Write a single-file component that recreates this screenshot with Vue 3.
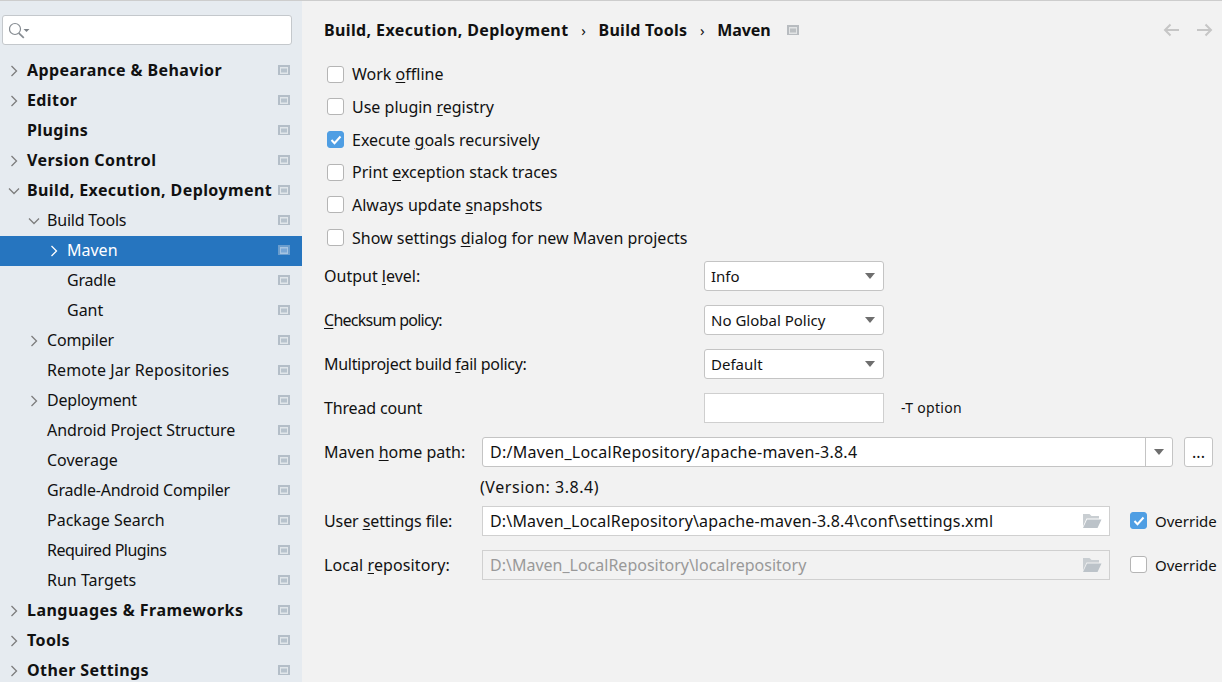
<script setup>
const tree = [
  { t: 'Appearance & Behavior', l: 0, b: true, a: 'r' },
  { t: 'Editor', l: 0, b: true, a: 'r' },
  { t: 'Plugins', l: 0, b: true },
  { t: 'Version Control', l: 0, b: true, a: 'r' },
  { t: 'Build, Execution, Deployment', l: 0, b: true, a: 'd' },
  { t: 'Build Tools', l: 1, a: 'd', c: 'tight' },
  { t: 'Maven', l: 2, a: 'r', s: true },
  { t: 'Gradle', l: 2, c: 'tight' },
  { t: 'Gant', l: 2 },
  { t: 'Compiler', l: 1, a: 'r', c: 'tight' },
  { t: 'Remote Jar Repositories', l: 1, c: 'loose' },
  { t: 'Deployment', l: 1, a: 'r', c: 'tight' },
  { t: 'Android Project Structure', l: 1, c: 'slim' },
  { t: 'Coverage', l: 1 },
  { t: 'Gradle-Android Compiler', l: 1, c: 'tight' },
  { t: 'Package Search', l: 1 },
  { t: 'Required Plugins', l: 1, c: 'tighter' },
  { t: 'Run Targets', l: 1 },
  { t: 'Languages & Frameworks', l: 0, b: true, a: 'r', c: 'wide' },
  { t: 'Tools', l: 0, b: true, a: 'r' },
  { t: 'Other Settings', l: 0, b: true, a: 'r' },
]
const checks = [
  ['Work ', 'o', 'ffline', false],
  ['Use plugin ', 'r', 'egistry', false],
  ['Execute ', 'g', 'oals recursively', true],
  ['Print ', 'e', 'xception stack traces', false],
  ['Always update ', 's', 'napshots', false],
  ['Show settings ', 'd', 'ialog for new Maven projects', false],
]
const selects = [
  ['Output ', 'l', 'evel:', 'Info', ''],
  ['', 'C', 'hecksum policy:', 'No Global Policy', 'ck'],
  ['Multiproject build ', 'f', 'ail policy:', 'Default', 'mp'],
]
</script>

<template>
  <div class="page">
    <aside class="side">
      <div class="search">
        <svg width="24" height="18" viewBox="0 0 24 18">
          <circle cx="6" cy="8" r="5.500" fill="none" stroke="#868c92" stroke-width="1.200" />
          <path d="M9.800 12.200l5 4.600" stroke="#868c92" stroke-width="1.800" />
          <path d="M14.500 8h6l-3 3z" fill="#7c8288" />
        </svg>
      </div>
      <div class="tree">
        <div v-for="n in tree" :key="n.t" class="row" :class="['lv' + n.l, { sel: n.s }]">
          <span class="arrow">
            <svg v-if="n.a" width="12" height="12" viewBox="0 0 12 12">
              <path v-if="n.a === 'r'" d="M3.500 1l5 5-5 5" fill="none" stroke="currentColor" stroke-width="1.300" />
              <path v-else d="M1 3.500l5 5 5-5" fill="none" stroke="currentColor" stroke-width="1.300" />
            </svg>
          </span>
          <span class="lbl" :class="[n.c, { bold: n.b }]">{{ n.t }}</span>
          <svg class="proj" width="12" height="10" viewBox="0 0 12 10">
            <rect class="p1" width="12" height="10" />
            <rect class="p2" x="2" y="2" width="8" height="7" />
            <rect class="p3" x="3" y="3.500" width="6" height="4" />
          </svg>
        </div>
      </div>
    </aside>
    <main class="main">
      <header class="head">
        <div class="crumbs">
          <b>Build, Execution, Deployment</b><span class="sep">›</span>
          <b class="bt">Build Tools</b><span class="sep">›</span>
          <b class="mv">Maven</b>
          <svg class="crumbproj" width="12" height="10" viewBox="0 0 12 10">
            <rect width="12" height="10" fill="#b8bcc0" />
            <rect x="2" y="2" width="8" height="7" fill="#e2e4e5" />
            <rect x="3" y="3.500" width="6" height="4" fill="#bcc0c3" />
          </svg>
        </div>
        <div class="nav">
          <svg width="16" height="14" viewBox="0 0 16 14"><path d="M16 7H2M7.500 1.500L2 7l5.500 5.500" fill="none" stroke="#c6c6c6" stroke-width="2" /></svg>
          <svg width="16" height="14" viewBox="0 0 16 14"><path d="M0 7h14M8.500 1.500L14 7l-5.500 5.500" fill="none" stroke="#c6c6c6" stroke-width="2" /></svg>
        </div>
      </header>

      <div class="checks">
        <label v-for="c in checks" :key="c[1] + c[2]" class="check">
          <span class="box" :class="{ on: c[3] }">
            <svg v-if="c[3]" width="12" height="10" viewBox="0 0 12 10"><path d="M1.500 5l3 3.200L10.500 1.500" fill="none" stroke="#fff" stroke-width="2" /></svg>
          </span>
          <span>{{ c[0] }}<u>{{ c[1] }}</u>{{ c[2] }}</span>
        </label>
      </div>

      <div class="selects">
        <div v-for="s in selects" :key="s[2]" class="frow">
          <span class="flabel wide" :class="s[4]">{{ s[0] }}<u>{{ s[1] }}</u>{{ s[2] }}</span>
          <div class="select">
            <span>{{ s[3] }}</span>
            <i class="tri"></i>
          </div>
        </div>
        <div class="frow">
          <span class="flabel wide tc">Thread count</span>
          <div class="plain"></div>
          <span class="hint">-T option</span>
        </div>
      </div>

      <div class="frow">
        <span class="flabel">Maven <u>h</u>ome path:</span>
        <div class="combo">
          <span class="val">D:/Maven_LocalRepository/apache-maven-3.8.4</span>
          <span class="drop"><i class="tri"></i></span>
        </div>
        <div class="dots">...</div>
      </div>
      <div class="version">(Version: 3.8.4)</div>
      <div class="frow">
        <span class="flabel us">User <u>s</u>ettings file:</span>
        <div class="path">
          <span class="pv">D:\Maven_LocalRepository\apache-maven-3.8.4\conf\settings.xml</span>
          <svg width="20" height="16" viewBox="0 0 20 16">
            <path d="M1 13.500V1h6.500l2 2H17v2.500H4.500z" fill="#c9ced2" />
            <path d="M5 6.500h14.500L15.500 15H1z" fill="#bcc3c9" />
          </svg>
        </div>
        <label class="check over">
          <span class="box on"><svg width="12" height="10" viewBox="0 0 12 10"><path d="M1.500 5l3 3.200L10.500 1.500" fill="none" stroke="#fff" stroke-width="2" /></svg></span>
          <span>Override</span>
        </label>
      </div>
      <div class="frow">
        <span class="flabel lr">Local <u>r</u>epository:</span>
        <div class="path disabled">
          <span>D:\Maven_LocalRepository\localrepository</span>
          <svg width="20" height="16" viewBox="0 0 20 16">
            <path d="M1 13.500V1h6.500l2 2H17v2.500H4.500z" fill="#c9ced2" />
            <path d="M5 6.500h14.500L15.500 15H1z" fill="#bcc3c9" />
          </svg>
        </div>
        <label class="check over">
          <span class="box"></span>
          <span>Override</span>
        </label>
      </div>
    </main>
  </div>
</template>

<style scoped>
.page {
  width: 1222px;
  height: 682px;
  overflow: hidden;
  display: flex;
  box-sizing: border-box;
  border-top: 1px solid #cdcdcd;
  font-family: "Noto Sans", sans-serif;
  font-size: 16px;
  color: #111;
  background: #f2f2f2;
}
u { text-underline-offset: 2px; }
.side {
  width: 302px;
  flex: none;
  background: #e6ebf0;
  padding-top: 14px;
  box-sizing: border-box;
}
.search {
  margin-left: 2px;
  width: 290px;
  height: 30px;
  box-sizing: border-box;
  background: #fff;
  border: 1px solid #c4c8cc;
  border-radius: 3px;
  display: flex;
  align-items: center;
  padding-left: 6px;
}
.tree { margin-top: 11px; }
.row {
  height: 30px;
  display: flex;
  align-items: center;
  position: relative;
}
.lv0 { padding-left: 8px; }
.lv1 { padding-left: 28px; }
.lv2 { padding-left: 48px; }
.arrow { width: 12px; height: 12px; flex: none; margin-right: 7px; color: #7d7d7d; display: flex; }
.lbl { white-space: nowrap; margin-bottom: 2px; }
.bold { font-weight: 700; letter-spacing: 0.4px; }
.bold.wide { letter-spacing: 0.48px; }
.tight { letter-spacing: -0.2px; }
.tighter { letter-spacing: -0.5px; }
.slim { letter-spacing: -0.08px; }
.loose { letter-spacing: 0.1px; }
.row .proj { position: absolute; left: 278px; top: 9px; }
.p1 { fill: #b4bec8; }
.p2 { fill: #e1e6ea; }
.p3 { fill: #b8c3cd; }
.sel { background: #2675bf; color: #fff; }
.sel .arrow { color: #fff; }
.sel .p1 { fill: #6b9dcd; }
.sel .p2 { fill: #a6c4e2; }
.sel .p3 { fill: #7ba8d6; }
.main { flex: 1; padding-left: 22px; min-width: 0; }
.head {
  height: 57px;
  display: flex;
  align-items: center;
  justify-content: space-between;
  padding-right: 9px;
}
.crumbs { display: flex; align-items: center; }
.crumbs b { letter-spacing: 0.38px; }
.crumbs .bt { letter-spacing: 0.28px; }
.crumbs .mv { letter-spacing: -0.1px; }
.sep { width: 30px; text-align: center; font-size: 15px; flex: none; }
.crumbproj { margin-left: 16px; }
.nav { display: flex; gap: 18px; }
.checks { display: flex; flex-direction: column; padding-left: 3px; }
.check { display: flex; align-items: center; gap: 8px; height: 32.67px; white-space: nowrap; }
.box {
  width: 17px;
  height: 17px;
  box-sizing: border-box;
  background: #fff;
  border: 1px solid #b5b5b5;
  border-radius: 3px;
  display: flex;
  align-items: center;
  justify-content: center;
  flex: none;
}
.box.on { background: #4f9ee3; border-color: #4f9ee3; }
.frow { display: flex; align-items: center; height: 44px; }
.flabel { width: 158px; flex: none; white-space: nowrap; }
.flabel.wide { width: 380px; }
.flabel.ck { letter-spacing: -0.75px; }
.flabel.mp { letter-spacing: -0.3px; }
.flabel.tc { letter-spacing: -0.15px; }
.flabel.us { letter-spacing: -0.1px; }
.flabel.lr { letter-spacing: 0.1px; }
.select, .plain {
  width: 180px;
  height: 30px;
  box-sizing: border-box;
  background: #fff;
  border: 1px solid #c4c4c4;
  border-radius: 3px;
  display: flex;
  align-items: center;
  justify-content: space-between;
  padding: 0 8px 0 6px;
  font-size: 15px;
}
.plain { border-radius: 0; border-color: #cfcfcf; }
.tri { width: 0; height: 0; border-left: 5px solid transparent; border-right: 5px solid transparent; border-top: 6px solid #6e6e6e; display: block; }
.hint { margin-left: 17px; font-size: 14px; letter-spacing: 0.3px; }
.combo {
  width: 691px;
  height: 30px;
  box-sizing: border-box;
  background: #fff;
  border: 1px solid #c4c4c4;
  border-radius: 3px;
  display: flex;
  align-items: center;
  justify-content: space-between;
  padding-left: 7px;
}
.val { letter-spacing: 0.25px; }
.drop { width: 27px; height: 100%; border-left: 1px solid #c4c4c4; display: flex; align-items: center; justify-content: center; box-sizing: border-box; }
.dots {
  margin-left: 11px;
  width: 29px;
  height: 30px;
  box-sizing: border-box;
  background: #fff;
  border: 1px solid #c4c4c4;
  border-radius: 3px;
  display: flex;
  justify-content: center;
  align-items: center;
}
.version { height: 25px; line-height: 27px; margin-left: 156px; letter-spacing: 0.55px; }
.pv { letter-spacing: 0.17px; }
.path {
  width: 628px;
  height: 30px;
  box-sizing: border-box;
  background: #fff;
  border: 1px solid #d0d0d0;
  display: flex;
  align-items: center;
  justify-content: space-between;
  padding: 0 7px 0 7px;
  flex: none;
}
.path.disabled { background: #f2f2f2; color: #999; }
.over { margin-left: 20px; font-size: 15px; }
</style>
